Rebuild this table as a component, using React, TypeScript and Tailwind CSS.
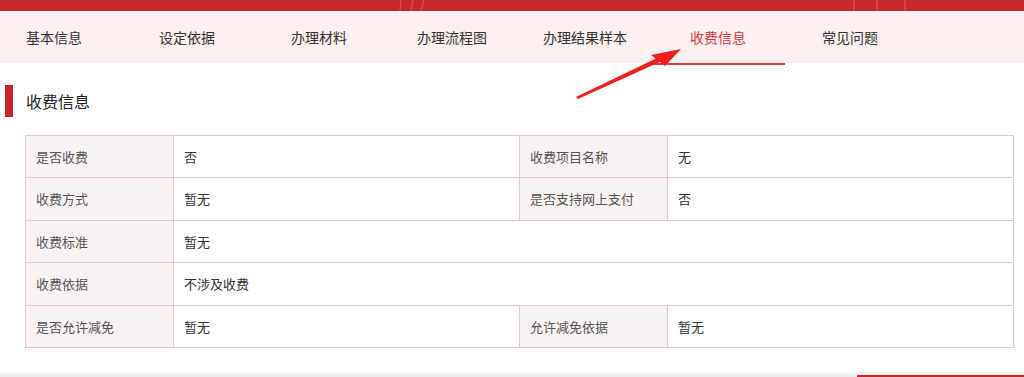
import React from 'react'

const tabs = [
  { label: '基本信息', w: 'w-[133px]' },
  { label: '设定依据', w: 'w-[132px]' },
  { label: '办理材料', w: 'w-[126px]' },
  { label: '办理流程图', w: 'w-[126px]' },
  { label: '办理结果样本', w: 'w-[147px]' },
  { label: '收费信息', w: 'w-[132px]', active: true },
  { label: '常见问题', w: 'w-[132px]' },
]

type Cell = { label: string; value: string }
const rows: Cell[][] = [
  [
    { label: '是否收费', value: '否' },
    { label: '收费项目名称', value: '无' },
  ],
  [
    { label: '收费方式', value: '暂无' },
    { label: '是否支持网上支付', value: '否' },
  ],
  [{ label: '收费标准', value: '暂无' }],
  [{ label: '收费依据', value: '不涉及收费' }],
  [
    { label: '是否允许减免', value: '暂无' },
    { label: '允许减免依据', value: '暂无' },
  ],
]

function TopBar() {
  // thin light streaks on the banner strip
  return (
    <div className="h-[11px] bg-[#c6282d] relative overflow-hidden">
      <svg className="absolute inset-0" width="1024" height="11">
        <g stroke="#ffffff" strokeOpacity="0.25" strokeWidth="1">
          <line x1="401" y1="0" x2="400" y2="11" />
          <line x1="413" y1="0" x2="411" y2="11" />
          <line x1="424" y1="0" x2="421" y2="11" />
          <line x1="854" y1="0" x2="854" y2="11" />
          <line x1="877" y1="0" x2="877" y2="11" />
          <line x1="905" y1="0" x2="905" y2="11" />
        </g>
      </svg>
    </div>
  )
}

function Arrow() {
  return (
    <svg className="absolute left-0 top-0 pointer-events-none" width="1024" height="377">
      <polygon points="576,97 578,99 662,61 659,57" fill="#f0201c" />
      <polygon points="681,49 651,55 665,66" fill="#f0201c" />
    </svg>
  )
}

export default function App() {
  return (
    <div
      className="relative w-[1024px] h-[377px] bg-white overflow-hidden"
      style={{ fontFamily: '"Microsoft YaHei", "Noto Sans CJK SC", sans-serif' }}
    >
      <TopBar />

      <nav className="h-[52px] bg-[#fdf0f0] flex items-center pl-[26px] relative">
        {tabs.map((t) => (
          <div key={t.label} className={`${t.w} shrink-0 relative h-full flex items-center`}>
            <span className={`text-[14px] ${t.active ? 'text-[#d7383e]' : 'text-[#333]'}`}>{t.label}</span>
            {t.active && (
              <div className="absolute left-[-37px] top-[52px] w-[132px] h-[2px] bg-[#d7383e]" />
            )}
          </div>
        ))}
      </nav>

      <div className="flex items-center mt-[22px] h-[32px]">
        <div className="ml-[5px] w-[8px] h-[32px] bg-[#c6282d]" />
        <h2 className="ml-[13px] text-[16px] text-[#222]">收费信息</h2>
      </div>

      <div className="ml-[25px] mt-[18px] w-[989px] border-t border-l border-[#ebc6c8]">
        {rows.map((r, i) => (
          <div key={i} className="flex h-[42.4px]">
            {r.map((c, j) => (
              <React.Fragment key={j}>
                <div className="w-[148px] shrink-0 bg-[#faf3f4] border-r border-b border-[#ebc6c8] flex items-center pl-[10px] text-[13px] text-[#555]">
                  {c.label}
                </div>
                <div
                  className={`${r.length === 1 ? 'flex-1' : j === 0 ? 'w-[346px] shrink-0' : 'flex-1'} border-r border-b border-[#ebc6c8] flex items-center pl-[10px] text-[13px] text-[#333]`}
                >
                  {c.value}
                </div>
              </React.Fragment>
            ))}
          </div>
        ))}
      </div>

      <div className="absolute left-0 right-0 bottom-0 h-[5px] bg-gradient-to-b from-[#f7f7f7] to-[#ececec]" />
      <div className="absolute right-0 bottom-0 w-[167px] h-[2px] bg-[#c6282d]" />

      <Arrow />
    </div>
  )
}
